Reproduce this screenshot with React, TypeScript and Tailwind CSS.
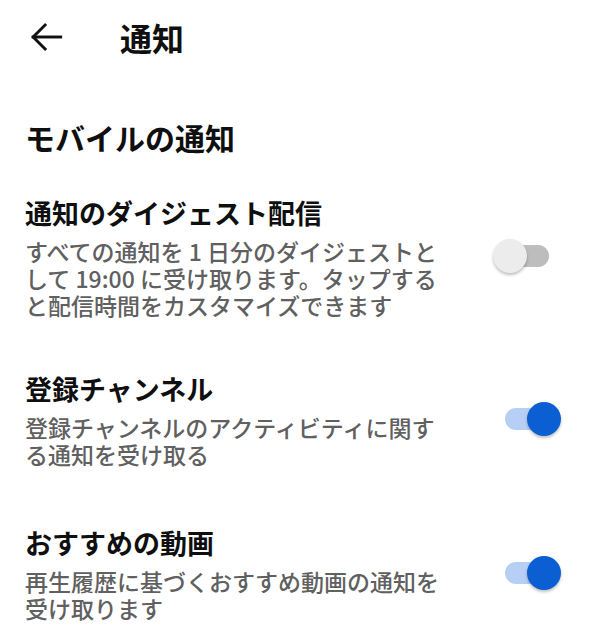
import { useState } from "react";

type Item = {
  title: string;
  desc: string;
  on: boolean;
  gap: string;
};

const items: Item[] = [
  {
    title: "通知のダイジェスト配信",
    desc: "すべての通知を 1 日分のダイジェストとして 19:00 に受け取ります。タップすると配信時間をカスタマイズできます",
    on: false,
    gap: "mt-[44px]",
  },
  {
    title: "登録チャンネル",
    desc: "登録チャンネルのアクティビティに関する通知を受け取る",
    on: true,
    gap: "mt-[55px]",
  },
  {
    title: "おすすめの動画",
    desc: "再生履歴に基づくおすすめ動画の通知を受け取ります",
    on: true,
    gap: "mt-[60px]",
  },
];

function Toggle({ on, onClick }: { on: boolean; onClick: () => void }) {
  return (
    <button type="button" onClick={onClick} className="relative h-[36px] w-[68px] shrink-0">
      <span
        className={`absolute left-[12px] top-[7px] h-[22px] w-[44px] rounded-full ${
          on ? "bg-[#b7cff4]" : "bg-[#bdbdbd]"
        }`}
      />
      <span
        className={`absolute top-[1px] h-[34px] w-[34px] rounded-full shadow-[0_2px_3px_rgba(0,0,0,0.25)] ${
          on ? "left-[34px] bg-[#0b5fd3]" : "left-0 bg-[#ececec]"
        }`}
      />
    </button>
  );
}

export default function App() {
  const [state, setState] = useState(items.map((i) => i.on));

  return (
    <main
      className="min-h-[642px] w-[600px] bg-white text-[#0f0f0f]"
      style={{ fontFamily: '"Noto Sans CJK JP", Roboto, sans-serif' }}
    >
      <header className="flex h-[74px] items-center">
        <button type="button" className="ml-[24px] flex h-[44px] w-[44px] items-center justify-center">
          <svg width="46" height="46" viewBox="0 0 24 24" fill="none" stroke="#111" strokeWidth="1.6" strokeLinecap="square">
            <path d="M20 12H5" />
            <path d="M11.5 5.5 5 12l6.5 6.5" />
          </svg>
        </button>
        <h1 className="ml-[52px] text-[32px] font-bold leading-none">通知</h1>
      </header>

      <h2 className="mt-[46px] pl-[25px] text-[30px] font-bold leading-[34px]">モバイルの通知</h2>

      {items.map((item, i) => (
        <div key={item.title} className={`flex items-center pl-[25px] ${item.gap}`}>
          <div className="w-[430px]">
            <p className="text-[27px] font-bold leading-[30px]">{item.title}</p>
            <p className="mt-[10px] text-[23px] font-medium leading-[27px] text-[#606060]">{item.desc}</p>
          </div>
          <div className="ml-[38px]">
            <Toggle
              on={state[i]}
              onClick={() => setState((s) => s.map((v, j) => (j === i ? !v : v)))}
            />
          </div>
        </div>
      ))}
    </main>
  );
}
